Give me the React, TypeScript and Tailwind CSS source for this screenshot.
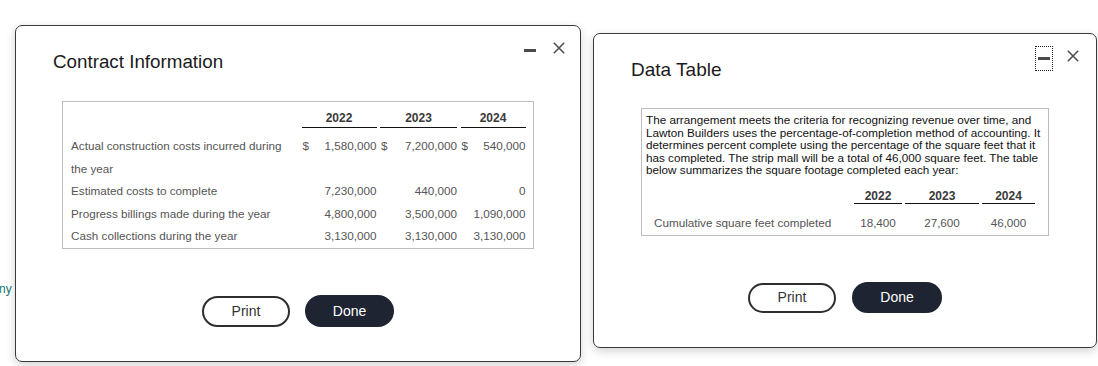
import React from "react";

function CloseIcon() {
  return (
    <svg width="12" height="12" viewBox="0 0 12 12" className="block">
      <path d="M0.8 0.8 L11.2 11.2 M11.2 0.8 L0.8 11.2" stroke="#505050" strokeWidth="1.6" fill="none" />
    </svg>
  );
}

function Controls({ focused, mr }: { focused: boolean; mr: string }) {
  return (
    <div className={`flex items-start mt-[12px] ${mr}`}>
      <div
        className={`w-[18px] h-[25px] flex items-center justify-center border border-dotted ${
          focused ? "border-[#222]" : "border-transparent"
        }`}
      >
        <div className="w-[12px] h-[3px] bg-[#4a4a4a]" />
      </div>
      <div className="ml-[14px] mt-[4px]">
        <CloseIcon />
      </div>
    </div>
  );
}

function LeftDialog() {
  const rows: { label: React.ReactNode; vals: string[]; dollar?: boolean }[] = [
    {
      label: (
        <>
          Actual construction costs incurred during
          <br />
          the year
        </>
      ),
      vals: ["1,580,000", "7,200,000", "540,000"],
      dollar: true,
    },
    { label: "Estimated costs to complete", vals: ["7,230,000", "440,000", "0"] },
    { label: "Progress billings made during the year", vals: ["4,800,000", "3,500,000", "1,090,000"] },
    { label: "Cash collections during the year", vals: ["3,130,000", "3,130,000", "3,130,000"] },
  ];
  return (
    <div className="absolute left-[15px] top-[25px] w-[566px] h-[337px] border border-[#3a3a3a] rounded-[7px] bg-white shadow-[0_3px_10px_rgba(0,0,0,0.18)] flex flex-col">
      <div className="flex items-start justify-between">
        <div className="ml-[37px] mt-[26px] text-[18.8px] leading-[19px] text-[#1b1b1b] whitespace-nowrap">
          Contract Information
        </div>
        <Controls focused={false} mr="mr-[15px]" />
      </div>
      <div className="mx-[46px] mt-[30px] border border-[#bdbdbd] pl-[8px] pt-[8.5px] pb-[0.5px]">
        <div className="grid grid-cols-[227px_75px_77px_65px] gap-x-[3.5px] text-[12px] leading-[14px]">
          <div />
          {["2022", "2023", "2024"].map((y) => (
            <div key={y} className="text-center font-bold text-[#3a3a3a] border-b border-[#111] pb-[2.5px]">
              {y}
            </div>
          ))}
        </div>
        <div className="mt-[7px] grid grid-cols-[227px_75px_77px_65px] gap-x-[3.5px] text-[11.7px] leading-[22.5px] text-[#555]">
          {rows.map((r, i) => (
            <React.Fragment key={i}>
              <div className="whitespace-nowrap">{r.label}</div>
              {r.vals.map((v, j) =>
                r.dollar ? (
                  <div key={j} className="flex justify-between pl-[1px]">
                    <span>$</span>
                    <span>{v}</span>
                  </div>
                ) : (
                  <div key={j} className="text-right">
                    {v}
                  </div>
                )
              )}
            </React.Fragment>
          ))}
        </div>
      </div>
      <div className="mt-[46px] flex justify-center items-center gap-[15px]">
        <button className="w-[88px] h-[31px] rounded-full border-2 border-[#2e2e2e] bg-white text-[14px] text-[#333] flex items-center justify-center">
          Print
        </button>
        <button className="w-[89px] h-[32px] rounded-full bg-[#1e2432] text-[14px] text-white flex items-center justify-center">
          Done
        </button>
      </div>
    </div>
  );
}

function RightDialog() {
  const lines = [
    "The arrangement meets the criteria for recognizing revenue over time, and",
    "Lawton Builders uses the percentage-of-completion method of accounting. It",
    "determines percent complete using the percentage of the square feet that it",
    "has completed. The strip mall will be a total of 46,000 square feet. The table",
    "below summarizes the square footage completed each year:",
  ];
  return (
    <div className="absolute left-[593px] top-[33px] w-[504px] h-[315px] border border-[#3a3a3a] rounded-[7px] bg-white shadow-[0_3px_10px_rgba(0,0,0,0.18)] flex flex-col">
      <div className="flex items-start justify-between">
        <div className="ml-[37px] mt-[25.5px] text-[19px] leading-[19px] text-[#1b1b1b] whitespace-nowrap">
          Data Table
        </div>
        <Controls focused={true} mr="mr-[17px]" />
      </div>
      <div className="mx-[47px] mt-[29.5px] border border-[#bdbdbd] pl-[4px] pt-[5px] pb-[5px]">
        <div className="text-[11.7px] leading-[12.5px] text-[#111]">
          {lines.map((l, i) => (
            <div key={i} className="whitespace-nowrap">
              {l}
            </div>
          ))}
        </div>
        <div className="mt-[12px] grid grid-cols-[205px_48px_74px_53px] gap-x-[3px] text-[12px] leading-[14px]">
          <div />
          {["2022", "2023", "2024"].map((y) => (
            <div key={y} className="text-center font-bold text-[#3a3a3a] border-b border-[#111] pb-[0.5px]">
              {y}
            </div>
          ))}
        </div>
        <div className="mt-[12px] grid grid-cols-[205px_48px_74px_53px] gap-x-[3px] text-[11.7px] leading-[14px] text-[#555]">
          <div className="pl-[8px] whitespace-nowrap">Cumulative square feet completed</div>
          <div className="text-center">18,400</div>
          <div className="text-center">27,600</div>
          <div className="text-center">46,000</div>
        </div>
      </div>
      <div className="mt-[46px] flex justify-center items-center gap-[16px]">
        <button className="w-[88px] h-[30px] rounded-full border-2 border-[#2e2e2e] bg-white text-[14px] text-[#333] flex items-center justify-center">
          Print
        </button>
        <button className="w-[90px] h-[31px] rounded-full bg-[#1e2432] text-[14px] text-white flex items-center justify-center">
          Done
        </button>
      </div>
    </div>
  );
}

export default function App() {
  return (
    <div className="relative w-[1098px] h-[366px] overflow-hidden bg-white font-['Liberation_Sans',Arial,sans-serif]">
      <span className="absolute left-[-1px] top-[282px] text-[12px] leading-[14px] text-[#137a72]">ny</span>
      <LeftDialog />
      <RightDialog />
    </div>
  );
}
